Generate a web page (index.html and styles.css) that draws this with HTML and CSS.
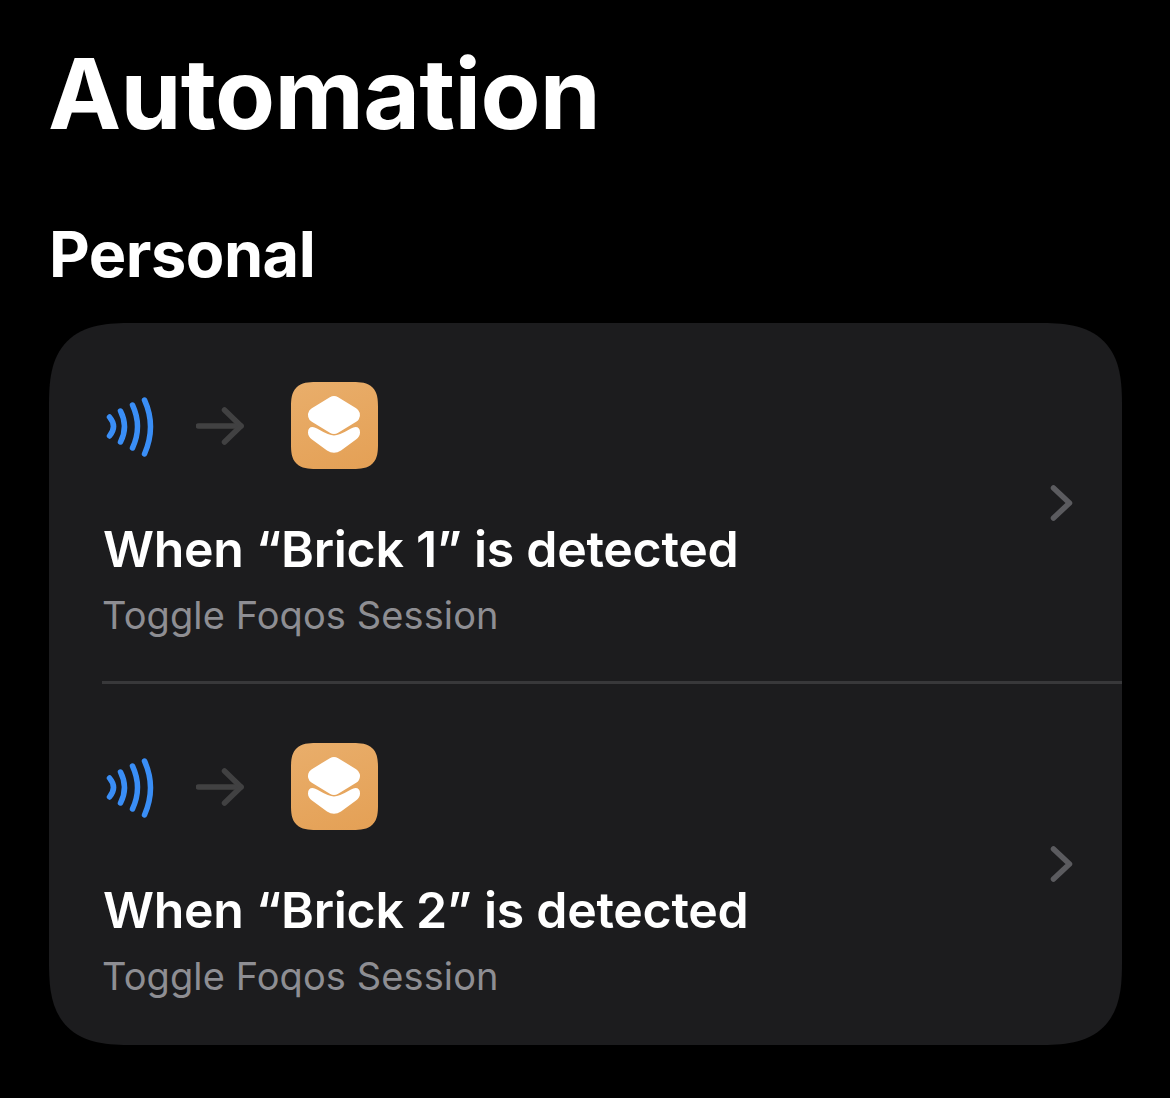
FILE: index.html
```html
<!DOCTYPE html>
<html lang="en">
<head>
<meta charset="utf-8">
<title>Automation</title>
<link rel="stylesheet" href="styles.css">
</head>
<body>
<main class="page">
  <h1 class="title">Automation</h1>
  <h2 class="section">Personal</h2>
  <section class="card">
    <div class="row">
      <div class="row-main">
        <div class="flow">
          <svg class="nfc" viewBox="0 0 48 62" width="48" height="62"><g fill="none" stroke="#3a8ef6" stroke-width="5.500" stroke-linecap="round"><path d="M3.500 22Q11.500 31.500 3.500 41"/><path d="M14.500 16Q22.500 31.500 14.500 47"/><path d="M26.500 10Q36.500 31.500 26.500 53"/><path d="M38.500 5Q50.500 31.500 38.500 59"/></g></svg>
          <svg class="arrow" viewBox="0 0 48 38" width="48" height="38"><g fill="none" stroke="#414142" stroke-width="5.500" stroke-linecap="round" stroke-linejoin="round"><path d="M2.500 19H45"/><path d="M28.500 3L45 19L28.500 35"/></g></svg>
          <div class="app">
            <svg viewBox="0 0 87 87" width="87" height="87"><path fill="#fff" stroke="#fff" stroke-width="16" stroke-linejoin="round" d="M43 22L61 33L43 44L25 33Z"/><path fill="#fff" d="M17 50.500Q17 45 21.500 45Q23.500 45 26 46.500Q38 53.500 43 53.500Q48 53.500 60 46.500Q62.500 45 64.500 45Q69 45 69 50.500Q69 54.500 65 57.500L50 68.500Q43 73 36 68.500L21 57.500Q17 54.500 17 50.500Z"/></svg>
          </div>
        </div>
        <div class="name">When “Brick 1” is detected</div>
        <div class="sub">Toggle Foqos Session</div>
      </div>
      <svg class="chev" viewBox="0 0 24 38" width="24" height="38"><path d="M3.500 4L19.500 19L3.500 34" fill="none" stroke="#5b5b5f" stroke-width="5.500" stroke-linecap="round" stroke-linejoin="round"/></svg>
    </div>
    <div class="row">
      <div class="row-main">
        <div class="flow">
          <svg class="nfc" viewBox="0 0 48 62" width="48" height="62"><g fill="none" stroke="#3a8ef6" stroke-width="5.500" stroke-linecap="round"><path d="M3.500 22Q11.500 31.500 3.500 41"/><path d="M14.500 16Q22.500 31.500 14.500 47"/><path d="M26.500 10Q36.500 31.500 26.500 53"/><path d="M38.500 5Q50.500 31.500 38.500 59"/></g></svg>
          <svg class="arrow" viewBox="0 0 48 38" width="48" height="38"><g fill="none" stroke="#414142" stroke-width="5.500" stroke-linecap="round" stroke-linejoin="round"><path d="M2.500 19H45"/><path d="M28.500 3L45 19L28.500 35"/></g></svg>
          <div class="app">
            <svg viewBox="0 0 87 87" width="87" height="87"><path fill="#fff" stroke="#fff" stroke-width="16" stroke-linejoin="round" d="M43 22L61 33L43 44L25 33Z"/><path fill="#fff" d="M17 50.500Q17 45 21.500 45Q23.500 45 26 46.500Q38 53.500 43 53.500Q48 53.500 60 46.500Q62.500 45 64.500 45Q69 45 69 50.500Q69 54.500 65 57.500L50 68.500Q43 73 36 68.500L21 57.500Q17 54.500 17 50.500Z"/></svg>
          </div>
        </div>
        <div class="name">When “Brick 2” is detected</div>
        <div class="sub">Toggle Foqos Session</div>
      </div>
      <svg class="chev" viewBox="0 0 24 38" width="24" height="38"><path d="M3.500 4L19.500 19L3.500 34" fill="none" stroke="#5b5b5f" stroke-width="5.500" stroke-linecap="round" stroke-linejoin="round"/></svg>
    </div>
  </section>
</main>
</body>
</html>
```
FILE: styles.css
```css
html, body {
  margin: 0;
  padding: 0;
  background: #000;
}
body {
  height: 1098px;
  overflow: hidden;
  font-family: Inter, "Liberation Sans", sans-serif;
  color: #fff;
}
.page {
  padding: 34px 48px 0 49px;
}
.title {
  margin: 0 0 0 -1px;
  font-size: 98px;
  line-height: 120px;
  font-weight: 700;
  letter-spacing: -0.7px;
}
.section {
  margin: 62px 0 0 0;
  font-size: 63px;
  line-height: 76px;
  font-weight: 700;
  letter-spacing: -0.5px;
}
.card {
  margin-top: 31px;
  background: #1c1c1e;
  border-radius: 84px;
  corner-shape: superellipse(1.5);
  height: 722px;
  overflow: hidden;
}
.row {
  height: 360px;
  box-sizing: border-box;
  padding: 59px 48px 0 54px;
  display: flex;
  justify-content: space-between;
  align-items: flex-start;
}
.row + .row {
  height: 362px;
  padding-top: 60px;
  position: relative;
}
.row + .row::before {
  content: "";
  position: absolute;
  left: 53px;
  right: 0;
  top: -2px;
  height: 3px;
  background: #38383a;
}
.flow {
  display: flex;
  align-items: center;
  height: 87px;
  margin-left: 3px;
}
.arrow { margin-left: 42px; }
.app {
  margin-left: 47px;
  width: 87px;
  height: 87px;
  border-radius: 25px;
  corner-shape: superellipse(1.5);
  background: linear-gradient(160deg, #e9ae6b, #e4a055);
}
.app svg { display: block; }
.name {
  margin-top: 46px;
  font-size: 50px;
  line-height: 68px;
  font-weight: 600;
  letter-spacing: -0.28px;
}
.sub {
  margin: 10px 0 0 -1px;
  font-size: 38px;
  line-height: 44px;
  letter-spacing: 0.1px;
  color: #8e8e93;
}
.chev { margin-top: 102px; }
```
